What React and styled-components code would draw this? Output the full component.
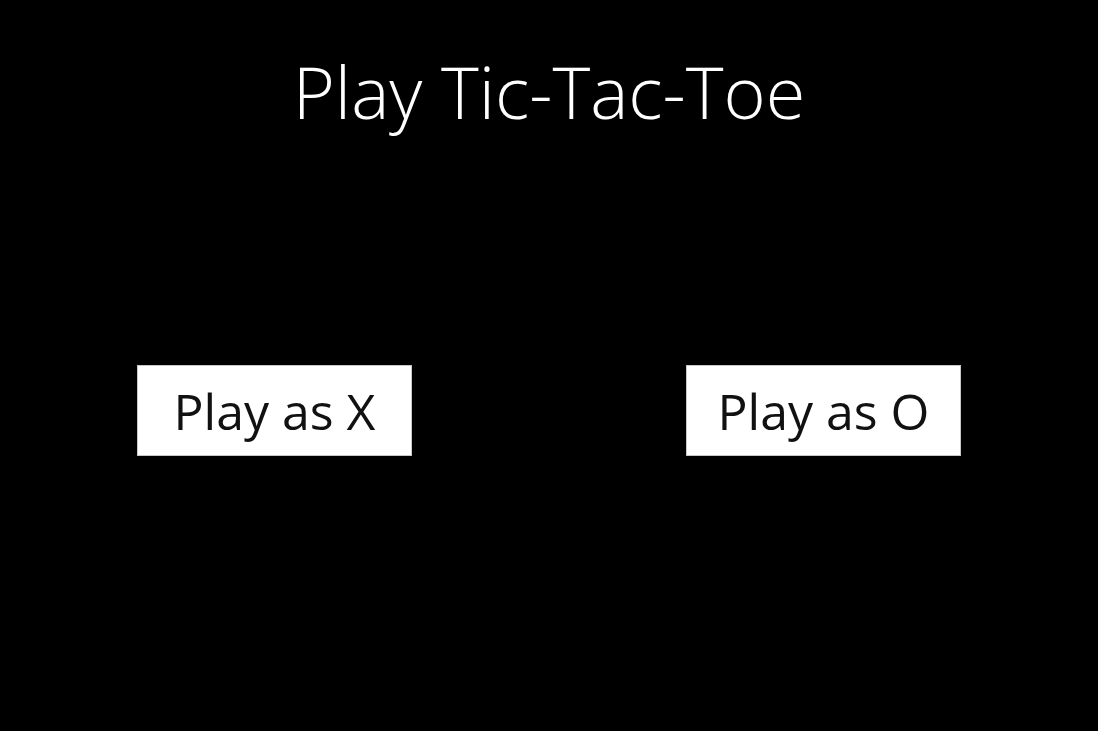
import React from 'react';
import styled, { createGlobalStyle } from 'styled-components';

const GlobalStyle = createGlobalStyle`
  html, body {
    margin: 0;
    padding: 0;
    background: #000;
  }
  body {
    font-family: 'Open Sans', 'Noto Sans', sans-serif;
  }
`;

const Page = styled('main')`
  display: flex;
  flex-direction: column;
  min-height: 100vh;
  box-sizing: border-box;
  background: #000;
  color: #fff;
`;

const Title = styled('h1')`
  margin: 42px 0 0;
  font-size: 72px;
  font-weight: 300;
  line-height: 98px;
  text-align: center;
`;

const Choices = styled('div')`
  display: grid;
  grid-template-columns: 1fr 1fr;
  justify-items: center;
  margin-top: 225px;
`;

const ChoiceButton = styled('button')`
  cursor: pointer;
  width: 275px;
  height: 91px;
  padding: 0;
  border: 1px solid #c8c8c8;
  background-color: #fff;
  color: #111;
  font-family: 'Open Sans', 'Noto Sans', sans-serif;
  font-size: 50px;
  font-weight: 400;
  line-height: 1;
`;

function App() {
  const pick = (side) => {
    console.log('playing as', side);
  };

  return (
    <>
      <GlobalStyle />
      <Page>
        <Title>Play Tic-Tac-Toe</Title>
        <Choices>
          <ChoiceButton type="button" onClick={() => pick('X')}>
            Play as X
          </ChoiceButton>
          <ChoiceButton type="button" onClick={() => pick('O')}>
            Play as O
          </ChoiceButton>
        </Choices>
      </Page>
    </>
  );
}

export default App;
